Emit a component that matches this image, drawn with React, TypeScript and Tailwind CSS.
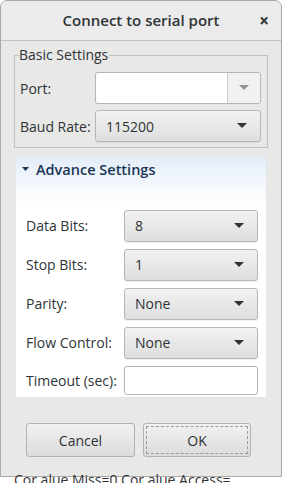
const Arrow = ({ muted }: { muted?: boolean }) => (
  <svg width="10" height="6" viewBox="0 0 10 6">
    <path d="M0 0 L10 0 L5 5 Z" fill={muted ? "#8f9294" : "#2e3436"} />
  </svg>
);

function Combo({ value, w }: { value: string; w: string }) {
  return (
    <div
      className={`${w} h-[32px] flex items-center justify-between pl-[10px] pr-[13px] rounded-[3px] border border-[#b6b6b3] bg-gradient-to-b from-[#f2f2f2] to-[#dedede] shadow-[0_1px_0_rgba(0,0,0,0.06)] text-[14px] text-[#2e3436]`}
    >
      <span>{value}</span>
      <Arrow />
    </div>
  );
}

function Row({ label, children }: { label: string; children: React.ReactNode }) {
  return (
    <div className="flex items-center">
      <div className="w-[98px] text-[14px] text-[#2e3436]">{label}</div>
      {children}
    </div>
  );
}

export default function App() {
  return (
    <div
      className="w-[282px] h-[483px] bg-white overflow-hidden flex flex-col"
      style={{ fontFamily: '"Open Sans", "Noto Sans", sans-serif' }}
    >
      <div className="h-[477px] shrink-0 flex flex-col bg-[#e8e8e7] border border-[#a9a9a9] rounded-t-[7px] overflow-hidden">
        {/* title bar */}
        <div className="h-[40px] shrink-0 grid grid-cols-[1fr_auto_1fr] items-center bg-[#ebebeb] border-b border-[#c3c3c3]">
          <div />
          <div className="text-[15px] font-semibold text-[#2e3436]">Connect to serial port</div>
          <div className="flex justify-end pr-[12px] text-[17px] font-bold text-[#2e3436]">×</div>
        </div>

        <fieldset className="mx-[13px] mt-[6px] border border-[#c1c1c0] px-[5px] pt-[9px] pb-[5px] flex flex-col gap-[6px]">
          <legend className="text-[14px] text-[#2e3436] leading-[16px] -ml-[1px] pr-[1px]">Basic Settings</legend>
          <div className="flex items-center">
            <div className="w-[75px] text-[14px] text-[#2e3436]">Port:</div>
            <div className="w-[166px] h-[32px] flex rounded-[3px] border border-[#b6b6b3] bg-white overflow-hidden">
              <div className="flex-1" />
              <div className="w-[33px] flex items-center justify-center border-l border-[#cfcfcd] bg-[#f1f1f1]">
                <Arrow muted />
              </div>
            </div>
          </div>
          <div className="flex items-center">
            <div className="w-[75px] text-[14px] text-[#2e3436]">Baud Rate:</div>
            <Combo value="115200" w="w-[166px]" />
          </div>
        </fieldset>

        {/* advance settings */}
        <div className="mx-[14px] mt-[7px] h-[243px] bg-gradient-to-b from-[#e3edf8] via-white via-[20%] to-white border border-[#e2e6ea]">
          <div className="flex items-center gap-[7px] pl-[6px] pt-[3px] text-[14.5px] font-semibold text-[#1a3656]">
            <svg width="7" height="5" viewBox="0 0 7 5">
              <path d="M0 0 L7 0 L3.5 4 Z" fill="#1a3656" />
            </svg>
            <span>Advance Settings</span>
          </div>
          <div className="mt-[29px] pl-[10px] flex flex-col gap-[7px]">
            <Row label="Data Bits:">
              <Combo value="8" w="w-[134px]" />
            </Row>
            <Row label="Stop Bits:">
              <Combo value="1" w="w-[134px]" />
            </Row>
            <Row label="Parity:">
              <Combo value="None" w="w-[134px]" />
            </Row>
            <Row label="Flow Control:">
              <Combo value="None" w="w-[134px]" />
            </Row>
            <Row label="Timeout (sec):">
              <div className="w-[134px] h-[29px] rounded-[3px] border border-[#b6b6b3] bg-white" />
            </Row>
          </div>
        </div>

        <div className="mt-[25px] pl-[25px] flex gap-[8px]">
          <button className="w-[109px] h-[34px] rounded-[3px] border border-[#b2b2af] bg-gradient-to-b from-[#f1f1f1] to-[#dcdcdc] text-[14px] text-[#2e3436]">
            Cancel
          </button>
          <button className="w-[108px] h-[34px] rounded-[3px] border border-[#b2b2af] bg-gradient-to-b from-[#f1f1f1] to-[#dcdcdc] text-[14px] text-[#2e3436] p-[2px]">
            <div className="w-full h-full border border-dashed border-[#9a9a9a] flex items-center justify-center">OK</div>
          </button>
        </div>
      </div>
      <div className="-mt-[5px] pl-[14px] text-[14px] leading-[16px] text-[#333] whitespace-nowrap">
        Cor alue Miss=0 Cor alue Access=
      </div>
    </div>
  );
}
